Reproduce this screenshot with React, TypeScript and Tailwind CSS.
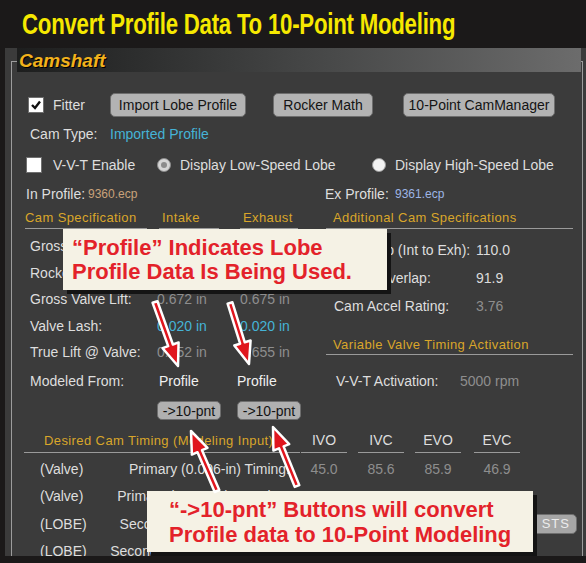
import React from 'react'

type Pt = [number, number]

function Arrow({ tail, tip }: { tail: Pt; tip: Pt }) {
  const dx = tip[0] - tail[0]
  const dy = tip[1] - tail[1]
  const len = Math.hypot(dx, dy)
  const ux = dx / len
  const uy = dy / len
  const nx = -uy
  const ny = ux
  const headLen = 22
  const w = 5
  const hw = 17
  const bx = tip[0] - ux * headLen
  const by = tip[1] - uy * headLen
  const p = (x: number, y: number) => `${x.toFixed(1)},${y.toFixed(1)}`
  const pts = [
    p(tail[0] + (nx * w) / 2, tail[1] + (ny * w) / 2),
    p(bx + (nx * w) / 2, by + (ny * w) / 2),
    p(bx + (nx * hw) / 2, by + (ny * hw) / 2),
    p(tip[0], tip[1]),
    p(bx - (nx * hw) / 2, by - (ny * hw) / 2),
    p(bx - (nx * w) / 2, by - (ny * w) / 2),
    p(tail[0] - (nx * w) / 2, tail[1] - (ny * w) / 2),
  ].join(' ')
  return <polygon points={pts} fill="#e0161e" stroke="#ffffff" strokeWidth={2.5} strokeLinejoin="round" />
}

function CheckBox({ checked }: { checked?: boolean }) {
  return (
    <div className="w-[16px] h-[16px] bg-white border border-[#707070] flex items-center justify-center shrink-0">
      {checked && (
        <svg width="12" height="12" viewBox="0 0 12 12">
          <path d="M2 6 L5 9 L10 2.5" fill="none" stroke="#111" strokeWidth="2.4" />
        </svg>
      )}
    </div>
  )
}

function Radio({ selected }: { selected?: boolean }) {
  return (
    <div
      className={
        selected
          ? 'w-[14px] h-[14px] rounded-full bg-[#d6d6d6] border border-[#8a8a8a] flex items-center justify-center shrink-0'
          : 'w-[14px] h-[14px] rounded-full bg-[#f2f2f2] border border-[#9a9a9a] shrink-0'
      }
    >
      {selected && <div className="w-[6px] h-[6px] rounded-full bg-[#8c8c8c]" />}
    </div>
  )
}

function Btn({ label, className }: { label: string; className: string }) {
  return (
    <div
      className={`h-[24px] rounded-[5px] bg-[#b3b3b3] border border-[#6e6e6e] flex items-center justify-center text-[14px] text-[#141414] leading-none ${className}`}
    >
      {label}
    </div>
  )
}

const specRows = [
  { label: 'Gross Lobe Lift:', intake: '0.448 in', exhaust: '0.450 in', color: 'text-[#8e8e8e]' },
  { label: 'Rocker Ratio:', intake: '1.50', exhaust: '1.50', color: 'text-[#8e8e8e]' },
  { label: 'Gross Valve Lift:', intake: '0.672 in', exhaust: '0.675 in', color: 'text-[#8e8e8e]' },
  { label: 'Valve Lash:', intake: '0.020 in', exhaust: '0.020 in', color: 'text-[#45b3d6]' },
  { label: 'True Lift @ Valve:', intake: '0.652 in', exhaust: '0.655 in', color: 'text-[#8e8e8e]' },
]

const timingRows = [
  { tag: '(Valve)', label: 'Primary (0.006-in) Timing:', vals: ['45.0', '85.6', '85.9', '46.9'] },
  { tag: '(Valve)', label: 'Primary (0.050-in) Duration:', vals: ['271.4', '274.6', '', ''] },
  { tag: '(LOBE)', label: 'Secondary 0.006-in Timing:', vals: ['', '', '', ''] },
  { tag: '(LOBE)', label: 'Secondary (0.050-in) Timing:', vals: ['334.4', '339.5', '110.0', '359.5'] },
]

export default function App() {
  return (
    <div className="relative w-[586px] h-[563px] bg-[#1b1919] overflow-hidden font-['Liberation_Sans',Arial,sans-serif]">
      {/* title */}
      <div className="h-[48px] pl-[22px] flex items-center">
        <span className="inline-block origin-left scale-x-[0.74] whitespace-nowrap text-[30px] font-bold text-[#f6e800] leading-none tracking-[-0.3px]">
          Convert Profile Data To 10-Point Modeling
        </span>
      </div>

      {/* panel */}
      <div className="ml-[5px] h-[508px] bg-[#3b3b3b] overflow-hidden flex flex-col">
        <div className="relative z-10 ml-[12px] w-[564px] h-[24px] shrink-0 bg-gradient-to-r from-[#1d1e1e] via-[#444545] to-[#6c6c6c] flex items-center pl-[2px]">
          <span className="text-[19px] font-bold italic text-[#f2b21c] leading-none [text-shadow:1px_1px_0_#000]">
            Camshaft
          </span>
        </div>

        <div className="-mt-[11px] ml-[6px] mr-[3px] flex-1 border-l border-t border-r border-[#9c9c9c] flex flex-col text-[14px] text-[#dedede] leading-none">
          {/* row 1 */}
          <div className="mt-[31px] h-[24px] pl-[16px] flex items-center">
            <CheckBox checked />
            <span className="ml-[9px] w-[57px]">Fitter</span>
            <Btn label="Import Lobe Profile" className="w-[136px]" />
            <Btn label="Rocker Math" className="ml-[27px] w-[100px]" />
            <Btn label="10-Point CamManager" className="ml-[30px] w-[152px]" />
          </div>

          {/* row 2 */}
          <div className="mt-[7px] h-[20px] pl-[18px] flex items-center">
            <span className="w-[80px]">Cam Type:</span>
            <span className="text-[#45b3d6]">Imported Profile</span>
          </div>

          {/* row 3 */}
          <div className="mt-[11px] h-[20px] pl-[14px] flex items-center">
            <CheckBox />
            <span className="ml-[11px] w-[104px]">V-V-T Enable</span>
            <Radio selected />
            <span className="ml-[9px] w-[192px]">Display Low-Speed Lobe</span>
            <Radio />
            <span className="ml-[9px]">Display High-Speed Lobe</span>
          </div>

          {/* row 4 */}
          <div className="mt-[10px] h-[18px] pl-[14px] flex items-center">
            <span className="w-[62px]">In Profile:</span>
            <span className="w-[237px] text-[12px] text-[#c9a27a]">9360.ecp</span>
            <span className="w-[70px]">Ex Profile:</span>
            <span className="text-[12px] text-[#9db5e5]">9361.ecp</span>
          </div>

          {/* middle */}
          <div className="mt-[4px] flex">
            {/* left column */}
            <div className="ml-[13px] w-[276px] flex flex-col">
              <div className="h-[22px] flex text-[13px] tracking-[0.4px] text-[#d9a62a]">
                <div className="w-[122px] border-b border-[#9a9a9a] flex items-center">Cam Specification</div>
                <div className="ml-[12px] w-[60px] border-b border-[#9a9a9a] flex items-center pl-[3px]">Intake</div>
                <div className="ml-[21px] w-[58px] border-b border-[#9a9a9a] flex items-center pl-[3px]">Exhaust</div>
              </div>
              <div className="mt-[4px] flex flex-col">
                {specRows.map((r) => (
                  <div key={r.label} className="h-[26.5px] flex items-center">
                    <span className="w-[132px] pl-[5px]">{r.label}</span>
                    <span className={`w-[83px] ${r.color}`}>{r.intake}</span>
                    <span className={r.color}>{r.exhaust}</span>
                  </div>
                ))}
                <div className="mt-[2px] h-[26.5px] flex items-center">
                  <span className="w-[132px] pl-[5px]">Modeled From:</span>
                  <span className="w-[80px] pl-[2px] text-[#f0f0f0]">Profile</span>
                  <span className="text-[#f0f0f0]">Profile</span>
                </div>
              </div>
              <div className="mt-[7px] h-[19px] flex">
                <div className="ml-[132px] w-[64px] h-[19px] rounded-[5px] bg-[#b0b0b0] border border-[#6e6e6e] flex items-center justify-center text-[14px] text-[#141414]">
                  -&gt;10-pnt
                </div>
                <div className="ml-[16px] w-[64px] h-[19px] rounded-[5px] bg-[#b0b0b0] border border-[#6e6e6e] flex items-center justify-center text-[14px] text-[#141414]">
                  -&gt;10-pnt
                </div>
              </div>
            </div>

            {/* right column */}
            <div className="ml-[25px] w-[247px] flex flex-col">
              <div className="h-[22px] border-b border-[#9a9a9a] flex items-center pl-[7px] text-[13px] tracking-[0.4px] text-[#d9a62a]">
                Additional Cam Specifications
              </div>
              <div className="mt-[7px] flex flex-col">
                <div className="h-[28px] flex items-center">
                  <span className="w-[150px] pl-[8px] whitespace-nowrap">Lobe Sep (Int to Exh):</span>
                  <span className="text-[#dcdcdc]">110.0</span>
                </div>
                <div className="h-[28px] flex items-center">
                  <span className="w-[150px] pl-[14px]">Valve Overlap:</span>
                  <span className="text-[#dcdcdc]">91.9</span>
                </div>
                <div className="h-[28px] flex items-center">
                  <span className="w-[150px] pl-[8px]">Cam Accel Rating:</span>
                  <span className="text-[#8e8e8e]">3.76</span>
                </div>
              </div>
              <div className="mt-[14px] h-[21px] border-b border-[#9a9a9a] flex items-center pl-[7px] text-[13px] tracking-[0.4px] text-[#d9a62a]">
                Variable Valve Timing Activation
              </div>
              <div className="mt-[16px] h-[20px] flex items-center pl-[10px]">
                <span className="w-[124px]">V-V-T Activation:</span>
                <span className="text-[#8e8e8e]">5000 rpm</span>
              </div>
            </div>
          </div>

          {/* lower */}
          <div className="mt-[8px] ml-[12px] h-[25px] flex">
            <div className="w-[276px] border-b border-[#9a9a9a] flex items-center pl-[20px] text-[13px] tracking-[0.4px] text-[#d9a62a]">
              Desired Cam Timing (Modeling Input)
            </div>
            <div className="ml-[1px] w-[46px] border-b border-[#9a9a9a] flex items-center justify-center">IVO</div>
            <div className="ml-[11px] w-[46px] border-b border-[#9a9a9a] flex items-center justify-center">IVC</div>
            <div className="ml-[11px] w-[46px] border-b border-[#9a9a9a] flex items-center justify-center">EVO</div>
            <div className="ml-[13px] w-[46px] border-b border-[#9a9a9a] flex items-center justify-center">EVC</div>
          </div>
          <div className="mt-[2px] ml-[12px] flex flex-col">
            {timingRows.map((r, i) => (
              <div key={i} className="h-[27.5px] flex items-center">
                <span className="w-[60px] pl-[16px] shrink-0">{r.tag}</span>
                <span className="w-[206px] text-right whitespace-nowrap">{r.label}</span>
                <span className="ml-[11px] w-[46px] text-center text-[#8e8e8e]">{r.vals[0]}</span>
                <span className="ml-[11px] w-[46px] text-center text-[#8e8e8e]">{r.vals[1]}</span>
                <span className="ml-[11px] w-[46px] text-center text-[#8e8e8e]">{r.vals[2]}</span>
                <span className="ml-[13px] w-[46px] text-center text-[#8e8e8e]">{r.vals[3]}</span>
                {i === 2 && (
                  <div className="ml-[2px] w-[55px] h-[20px] rounded-[5px] bg-[#a6a6a6] border border-[#6e6e6e] overflow-hidden flex items-center justify-end pr-[6px] text-[13px] tracking-[1px] text-[#ececec] whitespace-nowrap">
                    ADJ STS
                  </div>
                )}
              </div>
            ))}
          </div>
        </div>
      </div>

      {/* callouts */}
      <div className="absolute left-[63px] top-[229px] w-[324px] h-[61px] bg-[#f5f2e5] shadow-[4px_4px_0_#141414] flex flex-col justify-center pl-[9px] text-[22px] font-bold text-[#e3222a] leading-[24px] whitespace-nowrap">
        <span>“Profile” Indicates Lobe</span>
        <span>Profile Data Is Being Used.</span>
      </div>
      <div className="absolute left-[147px] top-[491px] w-[386px] h-[61px] bg-[#f5f2e5] shadow-[4px_4px_0_#141414] flex flex-col justify-center pl-[22px] text-[22px] font-bold text-[#e3222a] leading-[25px] whitespace-nowrap">
        <span>“-&gt;10-pnt” Buttons will convert</span>
        <span>Profile data to 10-Point Modeling</span>
      </div>

      <svg className="absolute left-0 top-0 pointer-events-none" width="586" height="563">
        <Arrow tail={[155, 302]} tip={[178, 366]} />
        <Arrow tail={[230, 303]} tip={[249, 364]} />
        <Arrow tail={[217, 491]} tip={[191, 431]} />
        <Arrow tail={[297, 486]} tip={[273, 427]} />
      </svg>
    </div>
  )
}
